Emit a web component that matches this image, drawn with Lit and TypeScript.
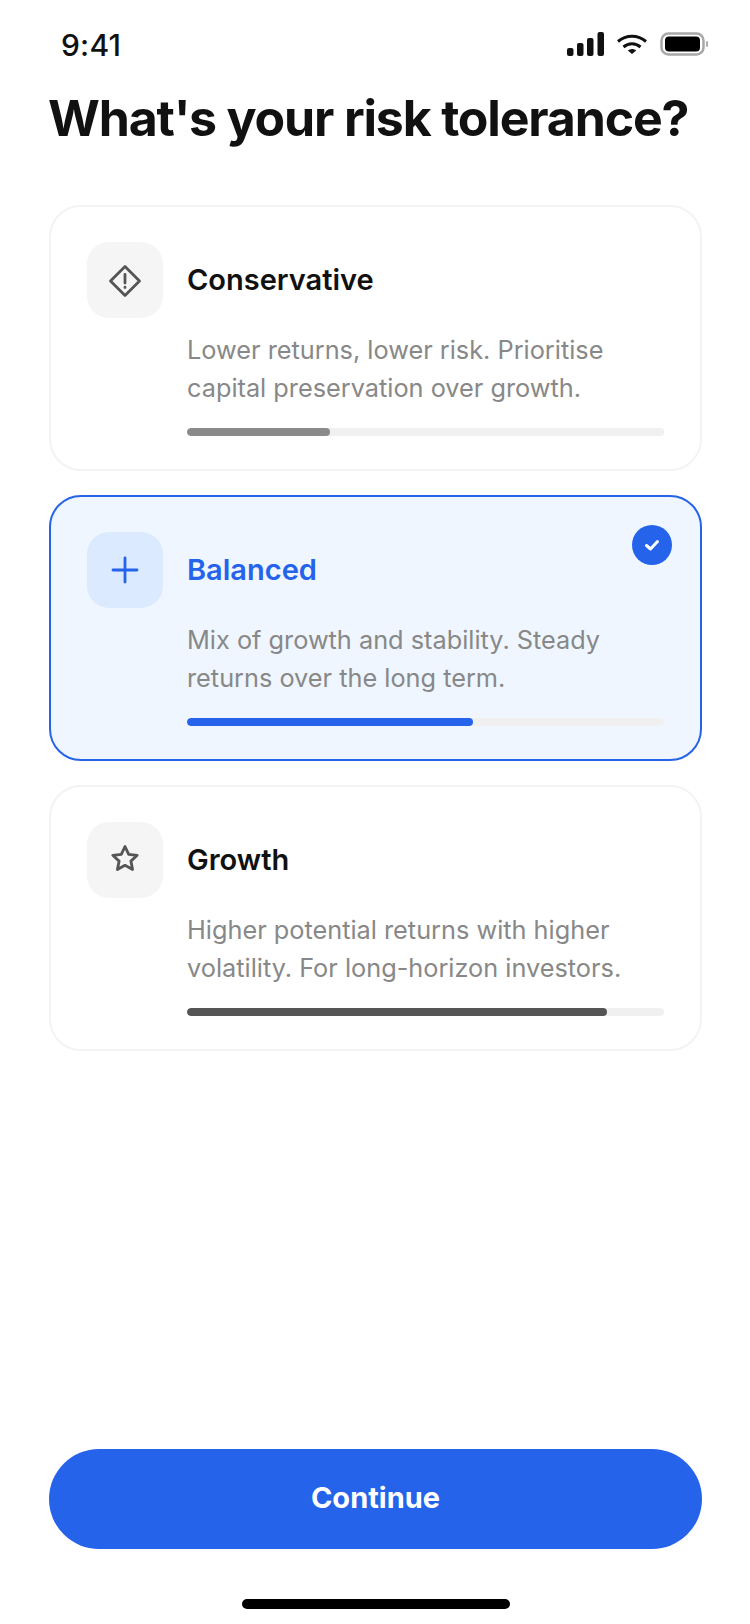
import { LitElement, html, css, svg } from "lit";
import { customElement } from "lit/decorators.js";
import { classMap } from "lit/directives/class-map.js";

const icons = {
  diamond: svg`<path d="M18 4.500 32.500 19 18 33.500 3.500 19Z" stroke-linejoin="round"/><path d="M18 12.500v8.500M18 25.200v.4" stroke-linecap="round"/>`,
  plus: svg`<path d="M18 6v24M6 18h24" stroke-linecap="round"/>`,
  star: svg`<path d="M18 4.500l3.700 7.800 8.500 1-6.300 5.800 1.700 8.400-7.600-4.200-7.600 4.200 1.700-8.400-6.300-5.800 8.500-1Z" stroke-linejoin="round"/>`,
};

const options = [
  { name: "Conservative", icon: icons.diamond, lines: ["Lower returns, lower risk. Prioritise", "capital preservation over growth."], level: 30, color: "#8a8a8a", selected: false },
  { name: "Balanced", icon: icons.plus, lines: ["Mix of growth and stability. Steady", "returns over the long term."], level: 60, color: "#2563eb", selected: true },
  { name: "Growth", icon: icons.star, lines: ["Higher potential returns with higher", "volatility. For long-horizon investors."], level: 88, color: "#555555", selected: false },
];

@customElement("app-root")
export class AppRoot extends LitElement {
  static styles = css`
    :host {
      display: block;
      width: 750px;
      height: 1624px;
      background: #fff;
      font-family: Inter, "Liberation Sans", sans-serif;
      color: #111;
    }
    .screen {
      height: 1624px;
      display: flex;
      flex-direction: column;
      box-sizing: border-box;
      padding: 0 48px;
    }
    .status {
      height: 88px;
      margin: 0 -48px;
      padding: 0 41px 0 61px;
      display: flex;
      align-items: center;
      justify-content: space-between;
      box-sizing: border-box;
    }
    .time {
      margin-top: 2px;
      font-size: 30px;
      font-weight: 500;
      letter-spacing: 0.2px;
      color: #111;
    }
    .status-icons {
      display: flex;
      align-items: center;
      gap: 12px;
    }
    h1 {
      margin: 1px 0 0;
      font-size: 50px;
      line-height: 58px;
      font-weight: 700;
      letter-spacing: -1.170px;
      color: #111;
      white-space: nowrap;
    }
    .list {
      margin: 58px 0 0 1px;
      display: flex;
      flex-direction: column;
      gap: 24px;
    }
    .card {
      position: relative;
      height: 266px;
      box-sizing: border-box;
      border: 2px solid #f3f3f3;
      border-radius: 32px;
      padding: 35px 36px;
      background: #fff;
    }
    .card.on {
      border-color: #2563eb;
      background: #eff6ff;
    }
    .head {
      display: flex;
      align-items: center;
      gap: 24px;
    }
    .icon {
      width: 76px;
      height: 76px;
      border-radius: 22px;
      background: #f5f5f5;
      color: #555;
      display: flex;
      align-items: center;
      justify-content: center;
    }
    .on .icon {
      background: #dbeafe;
      color: #2563eb;
    }
    .icon svg {
      fill: none;
      stroke: currentColor;
      stroke-width: 2.800;
    }
    .name {
      padding-bottom: 2px;
      font-size: 29px;
      font-weight: 600;
      color: #111;
    }
    .on .name {
      color: #2563eb;
    }
    .body {
      margin-left: 100px;
    }
    .desc {
      margin-top: 13px;
      font-size: 25.300px;
      line-height: 38px;
      color: #888;
      white-space: nowrap;
    }
    .track {
      margin-top: 21px;
      height: 8px;
      border-radius: 4px;
      background: #f0f0f0;
      overflow: hidden;
    }
    .fill {
      height: 100%;
      border-radius: 4px;
    }
    .check {
      position: absolute;
      top: 28px;
      right: 28px;
      width: 40px;
      height: 40px;
      border-radius: 50%;
      background: #2563eb;
      display: flex;
      align-items: center;
      justify-content: center;
    }
    .spacer {
      flex: 1;
    }
    .cta {
      height: 100px;
      margin: 0 0 0 1px;
      padding: 0 0 3px;
      border: none;
      border-radius: 50px;
      background: #2563eb;
      color: #fff;
      font: 700 29px Inter, "Liberation Sans", sans-serif;
    }
    .home-row {
      height: 75px;
      display: flex;
      align-items: flex-start;
      justify-content: center;
    }
    .home {
      margin: 50px 0 0 2px;
      width: 268px;
      height: 10px;
      border-radius: 5px;
      background: #000;
    }
  `;

  renderCard(o: (typeof options)[number]) {
    return html`
      <div class=${classMap({ card: true, on: o.selected })}>
        <div class="head">
          <div class="icon">
            <svg width="36" height="36" viewBox="0 0 36 36">${o.icon}</svg>
          </div>
          <div class="name">${o.name}</div>
        </div>
        <div class="body">
          <div class="desc">${o.lines[0]}<br />${o.lines[1]}</div>
          <div class="track">
            <div class="fill" style="width:${o.level}%;background:${o.color}"></div>
          </div>
        </div>
        ${o.selected
          ? html`<div class="check">
              <svg width="20" height="20" viewBox="0 0 20 20" fill="none" stroke="#fff" stroke-width="3" stroke-linecap="round" stroke-linejoin="round">
                <path d="M4.500 10.500 8.500 14 15.500 6.500" />
              </svg>
            </div>`
          : null}
      </div>
    `;
  }

  render() {
    return html`
      <div class="screen">
        <div class="status">
          <span class="time">9:41</span>
          <div class="status-icons">
            <svg width="37" height="24" viewBox="0 0 37 24" fill="#111">
              <rect x="0" y="16" width="6.500" height="8" rx="2" />
              <rect x="10" y="11" width="6.500" height="13" rx="2" />
              <rect x="20" y="6" width="6.500" height="18" rx="2" />
              <rect x="30.500" y="0" width="6.500" height="24" rx="2" />
            </svg>
            <svg width="32" height="24" viewBox="0 0 32 24" fill="none" stroke="#111" stroke-width="3">
              <path d="M2 9.500C10 2.500 22 2.500 30 9.500" />
              <path d="M7.500 15C12.500 10.800 19.500 10.800 24.500 15" />
              <path d="M16 22 11.800 18.500C14.400 16.500 17.600 16.500 20.200 18.500Z" fill="#111" stroke="none" />
            </svg>
            <svg width="49" height="26" viewBox="0 0 49 26">
              <rect x="1.500" y="2.500" width="42" height="21" rx="7" fill="none" stroke="#a8a8a8" stroke-width="2.500" />
              <rect x="5" y="5.500" width="35" height="15" rx="4" fill="#000" />
              <rect x="46" y="10" width="2" height="6" rx="1" fill="#b0b0b0" />
            </svg>
          </div>
        </div>
        <h1>What's your risk tolerance?</h1>
        <div class="list">${options.map((o) => this.renderCard(o))}</div>
        <div class="spacer"></div>
        <button class="cta">Continue</button>
        <div class="home-row"><div class="home"></div></div>
      </div>
    `;
  }
}
